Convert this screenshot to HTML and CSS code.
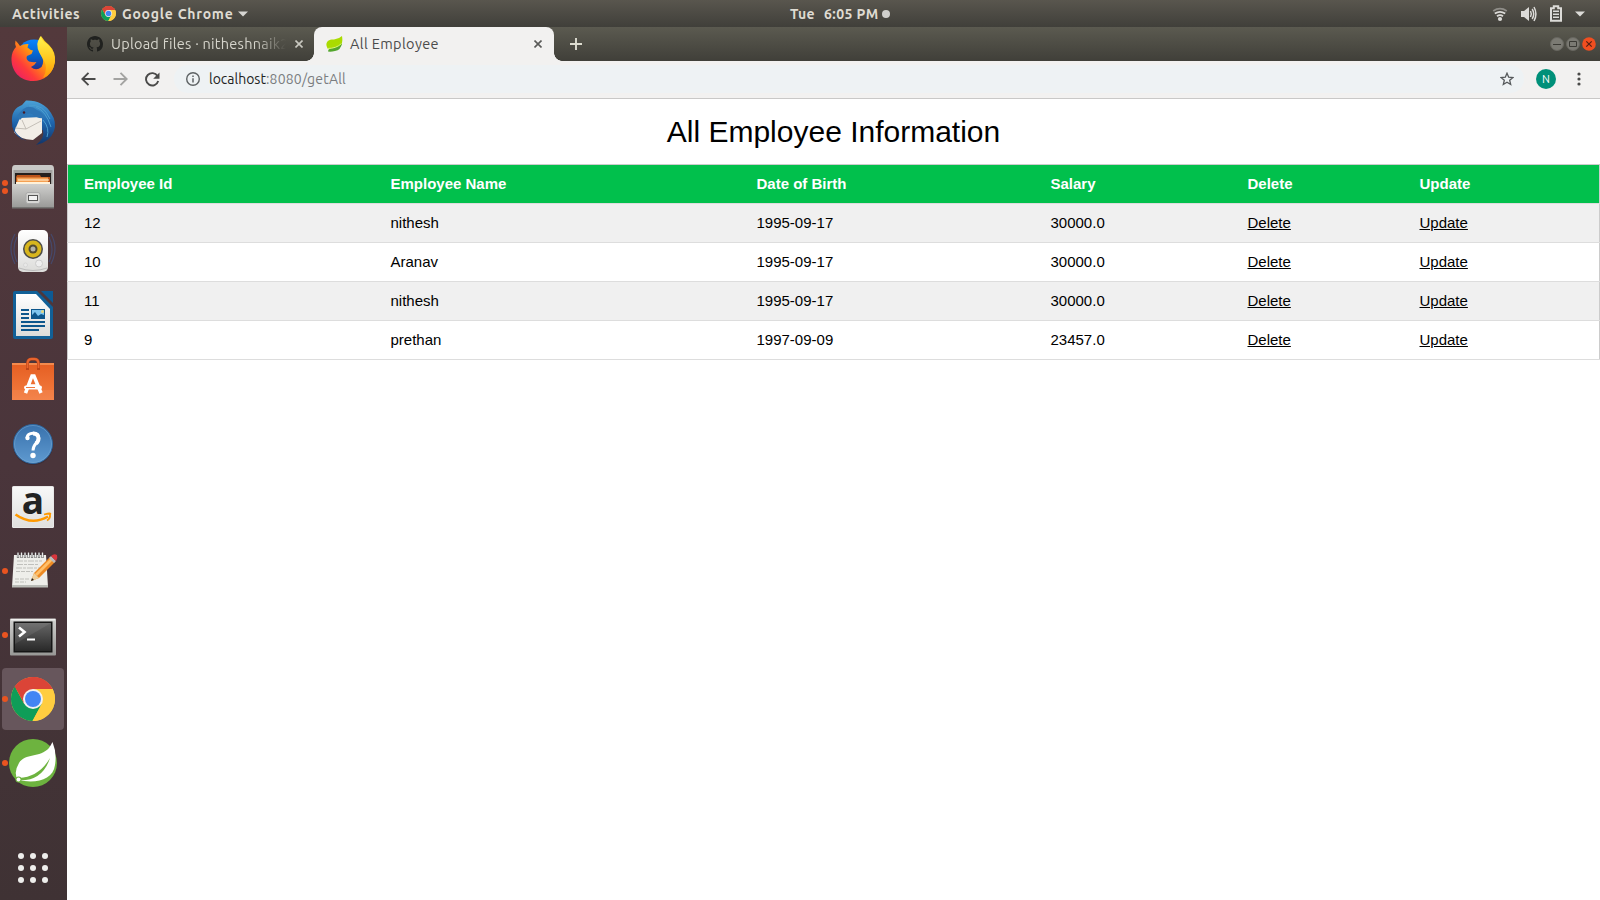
FILE: index.html
```html
<!DOCTYPE html>
<html lang="en">
<head>
<meta charset="utf-8">
<title>All Employee</title>
<link rel="stylesheet" href="styles.css">
</head>
<body>
<svg class="defs" width="0" height="0">
  <defs>
    <linearGradient id="fox" x1="1" y1="0" x2="0" y2="1"><stop offset=".1" stop-color="#ffe226"/><stop offset=".45" stop-color="#ff980e"/><stop offset=".7" stop-color="#ff3b3a"/><stop offset="1" stop-color="#e3127a"/></linearGradient>
    <linearGradient id="foxtail" x1="0" y1="0" x2="0" y2="1"><stop offset="0" stop-color="#fff44f"/><stop offset=".6" stop-color="#ffc31b"/><stop offset="1" stop-color="#ff9508"/></linearGradient>
    <linearGradient id="globe" x1="0" y1="0" x2="0" y2="1"><stop offset="0" stop-color="#0a84ff"/><stop offset=".5" stop-color="#0560c8"/><stop offset="1" stop-color="#331c70"/></linearGradient>
    <linearGradient id="bird" x1="0" y1="0" x2="0" y2="1"><stop offset="0" stop-color="#4ba2d8"/><stop offset=".5" stop-color="#1e65ad"/><stop offset="1" stop-color="#123467"/></linearGradient>
    <linearGradient id="steel" x1="0" y1="0" x2="0" y2="1"><stop offset="0" stop-color="#d0d0ce"/><stop offset="1" stop-color="#989896"/></linearGradient>
    <linearGradient id="paper" x1="0" y1="0" x2="0" y2="1"><stop offset="0" stop-color="#fff"/><stop offset="1" stop-color="#dcdcda"/></linearGradient>
    <linearGradient id="bag" x1="0" y1="0" x2="0" y2="1"><stop offset="0" stop-color="#e55e22"/><stop offset="1" stop-color="#f47d40"/></linearGradient>
    <linearGradient id="help" x1="0" y1="0" x2="0" y2="1"><stop offset="0" stop-color="#3871ac"/><stop offset="1" stop-color="#5f9ad0"/></linearGradient>
    <linearGradient id="screen" x1="0" y1="0" x2="0" y2="1"><stop offset="0" stop-color="#666"/><stop offset="1" stop-color="#292929"/></linearGradient>
    <g id="chrome">
      <circle cx="24" cy="24" r="22" fill="#ffcd40"/>
      <path d="M24 24 4.950 13A22 22 0 0 1 43.050 13.500L43.700 14H24Z" fill="#db4437"/>
      <path d="M4.950 13A22 22 0 0 0 23.500 46L32.700 29 24 24 15.300 29 5.800 11.600Z" fill="#0f9d58"/>
      <path d="M24 14h19.600A22 22 0 0 1 23.500 46L32.700 29Z" fill="#ffcd40"/>
      <path d="M5.800 11.600A22 22 0 0 1 43.600 14H24L15.300 29Z" fill="#db4437"/>
      <circle cx="24" cy="24" r="10" fill="#f1f1f1"/><circle cx="24" cy="24" r="8" fill="#4285f4"/>
    </g>
  </defs>
</svg>
<header class="topbar">
  <div class="top-left">
    <span class="activities">Activities</span>
    <svg class="app-icon" width="15" height="15" viewBox="2 2 44 44"><use href="#chrome"/></svg>
    <span class="app-name">Google Chrome</span>
    <svg class="app-arrow" width="10" height="6"><path d="M0 .5h10L5 5.5z" fill="#d6d5d2"/></svg>
  </div>
  <div class="clock"><span class="day">Tue</span><span class="time">6:05 PM</span><i class="notice"></i></div>
  <div class="tray">
    <svg width="16" height="16" viewBox="0 0 16 16"><g fill="none" stroke="#dcdbd8" stroke-width="1.8"><path d="M1.200 5Q8 .4 14.800 5" stroke="#8f8d88"/><path d="M2.800 7.600Q8 4 13.200 7.600"/><path d="M5 10.300Q8 8 11 10.300"/></g><circle cx="8" cy="13" r="2.1" fill="#dcdbd8"/></svg>
    <svg width="16" height="16" viewBox="0 0 16 16"><path d="M0 5h3l5-4v14l-5-4H0z" fill="#dcdbd8"/><g fill="none" stroke="#dcdbd8" stroke-width="1.5"><path d="M9.500 5q1.600 3 0 6M11.200 3q3 5 0 10"/><path d="M13 1q3.800 7 0 14"/></g></svg>
    <svg width="14" height="17" viewBox="0 0 14 17"><path d="M2 3.200h2.800V1.200h4.400v2H12v12.600H2z" fill="none" stroke="#dcdbd8" stroke-width="2"/><path d="M4 6.200h6M4 9.200h6M4 12.200h6" stroke="#dcdbd8" stroke-width="1.6"/></svg>
    <svg width="10" height="6"><path d="M0 .5h10L5 5.5z" fill="#dcdbd8"/></svg>
  </div>
</header>
<div class="desktop">
  <nav class="dock">
    <div class="tile"><svg viewBox="0 0 67 64">
      <circle cx="34" cy="30" r="17.5" fill="url(#globe)"/>
      <path d="M15.500 13.500Q18 16 20 19Q24 16.500 28.500 17L27.500 20.500Q30 23 33 23.500L31.500 27L27 29Q25.500 32 29 34.500Q33 35.500 36.500 35Q35 38 31 40Q36 44.500 41.500 40Q45 34 41 28Q36 20 41 9Q44 14 49 18Q56 25 55 35C53 47 44 54 33 54C20 54 11 44 11.500 31Q12 24 16 20Q14.500 17 15.500 13.500Z" fill="url(#fox)"/>
      <path d="M40.500 9Q42 14 47 17Q56 25 54.500 36Q53 47 43 51Q49 41 43 32Q35 20 38 14Z" fill="url(#foxtail)"/>
    </svg></div>
    <div class="tile"><svg viewBox="0 0 67 64">
      <path d="M12 31Q11 18 22 14L26 9.500Q43 9 51 22Q57 31 54 40Q50 51 36 54Q45 47 43 39L18 45Q12 39 12 31Z" fill="url(#bird)"/>
      <path d="M14 41 20 27 42 26 42 42 33 49Q19 48 14 41Z" fill="#f2eee7"/><path d="m15 37 11 1 15-8M26 38l-4-9" fill="none" stroke="#b8b2ab" stroke-width=".8"/>
      <path d="M17 25Q27 10 37 19Q43 21 44 27Q37 28 32 23Q27 21 20 29Z" fill="#2d75b5"/>
      <path d="M29 15Q43 12 50 28M36 16Q46 20 51 36M43 29Q50 37 47 46" fill="none" stroke="#4c9fd0" stroke-width="1"/>
      <path d="M12 30Q13 44 27 50Q15 47 12 35Z" fill="#195196"/><circle cx="24" cy="21.500" r="1.200" fill="#471b27"/>
    </svg></div>
    <div class="tile"><i class="run pair"></i><svg viewBox="0 0 67 64">
      <path d="M15 10h36q3 0 3 4v39H12V14q0-4 3-4Z" fill="#c9c9c7"/><path d="M13.500 15h39v14h-39z" fill="#a1a19f"/>
      <path d="M15 18h36v12H15z" fill="#26201e"/><path d="M17 20h23l1 2h9v7H16v-7z" fill="#bc551b"/><path d="M17 22.500h31v6H17z" fill="#f5a052"/><path d="M18 24.500h31v1H18zM16 27h34v2H16z" fill="#fff1d9"/>
      <path d="M12 29h42v24H12z" fill="url(#steel)"/><path d="M12 52h42v1.500H12z" fill="#747472"/>
      <rect x="26" y="37.500" width="14" height="11" rx="2" fill="#d7d7d5" stroke="#aaa"/><rect x="28.500" y="40.500" width="9" height="5" fill="#f2f2f2" stroke="#555"/>
    </svg></div>
    <div class="tile"><svg viewBox="0 0 67 64">
      <g fill="none" stroke="#46496b" stroke-width="1.2"><path d="M15 15q-8 14 0 30M17 18q-6 12 0 25M51 15q8 14 0 30M49 18q6 12 0 25"/></g>
      <rect x="18" y="11" width="30" height="42" rx="5" fill="url(#paper)"/><path d="M19 49q14 5 28 0" fill="none" stroke="#bbb"/>
      <circle cx="33" cy="19" r="0" fill="#bbb"/><circle cx="33" cy="30" r="10" fill="#4b4b48"/><circle cx="33" cy="30" r="8.500" fill="#d7b51d"/><circle cx="33" cy="30" r="4.500" fill="#524a31"/><circle cx="33" cy="30" r="2.500" fill="#b3b2a9"/>
      <circle cx="39" cy="44.500" r="3.500" fill="#eee" stroke="#ccc"/><circle cx="25.500" cy="46" r="2" fill="#e9e9e8" stroke="#ccc" stroke-width=".6"/>
    </svg></div>
    <div class="tile"><svg viewBox="0 0 67 64">
      <path d="M15 8h22l16 16v30q0 2-2 2H15q-2 0-2-2V10q0-2 2-2Z" fill="#116097"/><path d="M41 8h12v12z" fill="#0d5a94"/><path d="M16 11h20l14 15v27H16z" fill="url(#paper)"/>
      <path d="M21 27h8M21 31h8M21 35h8M21 39h24M21 43h24M21 47h18" stroke="#0c568c" stroke-width="2"/>
      <path d="M31 26h14v10H31z" fill="#0c568c"/><path d="M32 27h12v5l-3-1-3 2-3-4-3 3z" fill="#7ec5ef"/><circle cx="42.500" cy="28.500" r="1.500" fill="#e7d67c"/>
    </svg></div>
    <div class="tile"><svg viewBox="0 0 67 64">
      <path d="M12 16h42v37H12z" fill="url(#bag)"/><path d="M12 16h42v2H12z" fill="#f48a4d"/><path d="M12 43h42v10H12z" fill="#fff" opacity=".06"/>
      <path d="M27.500 23v-6q0-5 4-5h3q4 0 4 5v6" fill="none" stroke="#bd4518" stroke-width="3"/><path d="M27.500 21v-4q0-5 4-5h3q4 0 4 5v4" fill="none" stroke="#e9652e" stroke-width="1.8"/>
      <path d="M25.500 46 32 29h2l7 17M29 39h8" fill="none" stroke="#fff" stroke-width="3.5"/><rect x="24" y="38.500" width="18" height="4" rx="2" fill="#fff"/><path d="M26 40.500h9" stroke="#ef7840"/>
    </svg></div>
    <div class="tile"><svg viewBox="0 0 67 64">
      <circle cx="33" cy="34" r="20" fill="#302532" opacity=".5"/><circle cx="33" cy="33" r="19.500" fill="url(#help)" stroke="#2d659d"/><circle cx="33" cy="33" r="18.500" fill="none" stroke="#7aabd4" opacity=".5"/>
      <path d="M27 27C26.500 21 39 20.500 38.800 27C38.600 32 33 32.500 33 39.500" fill="none" stroke="#fff" stroke-width="3"/><path d="M33 22.500q5.500 0 5.500 5 0 3-2.500 5" fill="none" stroke="#fff" stroke-width="4"/><circle cx="27.500" cy="27" r="2.200" fill="#fff"/><circle cx="33" cy="44.500" r="2.700" fill="#fff"/>
    </svg></div>
    <div class="tile"><svg viewBox="0 0 67 64">
      <rect x="12" y="11" width="42" height="42" rx="1.500" fill="#e8e8e8"/><path d="M13 12h40v40H13z" fill="url(#paper)" opacity=".7"/>
      <text class="amazon-a" x="33" y="39" text-anchor="middle">a</text>
      <path d="M15.500 39.500Q32 51 48 41.500" fill="none" stroke="#ff9900" stroke-width="2.6"/><path d="M44 39.500q8-2 6 0 .5 4-3 6" fill="none" stroke="#ff9900" stroke-width="1.8"/>
    </svg></div>
    <div class="tile"><i class="run"></i><svg viewBox="0 0 67 64">
      <path d="M14 16h32l2 32H12z" fill="#eeeeea"/><path d="M12 46h36v2.500H12z" fill="#b9bbb6"/>
      <g fill="none" stroke="#b4b4b0" stroke-width=".8"><path d="M17 22h25M17 25.500h22M16 29h24" stroke-dasharray="6 1 3 1"/><path d="M16 32.500h17M15 40h14M15 43h11" stroke-dasharray="4 1"/></g>
      <path d="M18 14v5M21.500 14v5M25 14v5M28.500 14v5M32 14v5M35.500 14v5M39 14v5M42.500 14v5" stroke="#555" stroke-width="2.2"/><path d="M18 13.500v5M21.500 13.500v5M25 13.500v5M28.500 13.500v5M32 13.500v5M35.500 13.500v5M39 13.500v5M42.500 13.500v5" stroke="#eee" stroke-width="1.2"/>
      <path d="m31 42 3-8 16-16 5 5-16 16z" fill="#ed8a24"/><path d="m35 35 16-16 2 2-16 16z" fill="#ffc06a"/><path d="m31 42 3-8 5 5z" fill="#edcf9c"/><path d="m31 42 1-3 2 2z" fill="#222"/><path d="m49 19 2-2 5 5-2 2z" fill="#bbb"/><path d="m51 17q3-3 6-1 1 3-1 6z" fill="#d8363d"/>
    </svg></div>
    <div class="tile"><i class="run"></i><svg viewBox="0 0 67 64">
      <rect x="10" y="15.500" width="46" height="37" rx="1" fill="url(#steel)"/><path d="M11 16h44v1.500H11z" fill="#f0f0ee"/><path d="M13.500 18.500h39v31h-39z" fill="#151515"/><path d="M15 20h36v28H15z" fill="url(#screen)"/><path d="M15 20h36L15 41z" fill="#fff" opacity=".08"/>
      <path d="m19 24.500 5.500 4.500-5.500 4.500" fill="none" stroke="#fff" stroke-width="2.6"/><path d="M27 36.500h8" stroke="#fff" stroke-width="2"/>
    </svg></div>
    <div class="tile active"><i class="run"></i><svg viewBox="0 0 67 64"><use href="#chrome" x="9" y="8"/></svg></div>
    <div class="tile"><i class="run"></i><svg viewBox="0 0 67 64">
      <circle cx="33" cy="32" r="24" fill="#6db33f"/>
      <path d="M52.500 11Q57 22 55 34C53 49 36 53 18 49Q13 42 19 32C25 22 40 27 49 17Q51 14 52.500 11Z" fill="#fff"/>
      <path d="M19 47Q39 46 50 27Q43 49 21 49.500Z" fill="#6db33f"/><circle cx="18.500" cy="48.500" r="3" fill="#6db33f"/><circle cx="18.500" cy="48.500" r="2" fill="#fff"/>
    </svg></div>
    <div class="apps"><i></i><i></i><i></i><i></i><i></i><i></i><i></i><i></i><i></i></div>
  </nav>
  <main class="browser">
    <div class="tabs">
      <div class="tab idle">
        <svg class="github" width="16" height="16" viewBox="0 0 16 16"><path fill="#20211f" d="M8 0C3.580 0 0 3.580 0 8c0 3.540 2.290 6.530 5.470 7.590.4.070.55-.17.55-.38 0-.19-.01-.82-.01-1.490-2.010.37-2.530-.49-2.690-.94-.09-.23-.48-.94-.82-1.130-.28-.15-.68-.52-.01-.53.63-.01 1.080.58 1.230.82.72 1.210 1.870.87 2.330.66.07-.52.28-.87.51-1.070-1.780-.2-3.640-.89-3.640-3.950 0-.87.31-1.590.82-2.150-.08-.2-.36-1.020.08-2.120 0 0 .67-.21 2.200.82.64-.18 1.320-.27 2-.27s1.360.09 2 .27c1.530-1.040 2.200-.82 2.200-.82.44 1.100.16 1.920.08 2.120.51.56.82 1.270.82 2.150 0 3.070-1.870 3.750-3.650 3.950.29.25.54.73.54 1.480 0 1.070-.01 1.930-.01 2.200 0 .21.15.46.55.38A8.010 8.010 0 0 0 16 8c0-4.420-3.580-8-8-8z"/></svg>
        <span class="tab-title upload">Upload files · nitheshnaik2</span>
        <svg class="close" width="8" height="8"><path d="m.5.5 7 7m0-7-7 7" stroke="#c9c8c0" stroke-width="1.6"/></svg>
      </div>
      <div class="tab current">
        <svg class="leaf" width="17" height="16" viewBox="0 0 17 16"><path d="M16 0Q18 12 9 13.500Q4 15 2 13C-2 7 2 3 8 3.500Q13 3 16 0Z" fill="#aadb00"/><path d="M2 15.500q0-3 5-3.500 6-1 9-5-1 7-7 8-4 1-7 .5Z" fill="#53a62d"/><path d="M1.500 12.500q9 0 14-5" fill="none" stroke="#d9f27a"/></svg>
        <span class="tab-title">All Employee</span>
        <svg class="close" width="8" height="8"><path d="m.5.5 7 7m0-7-7 7" stroke="#5a5a58" stroke-width="1.6"/></svg>
      </div>
      <svg class="plus" width="12" height="12"><path d="M6 0v12M0 6h12" stroke="#dddcd0" stroke-width="1.9"/></svg>
      <div class="controls">
        <svg width="14" height="14"><circle cx="7" cy="7" r="6.500" fill="#7b7a73" stroke="#67665f"/><path d="M3 7.500h8" stroke="#3b3a35"/></svg>
        <svg width="14" height="14"><circle cx="7" cy="7" r="6.500" fill="#7b7a73" stroke="#67665f"/><path d="M3.500 4.500h7v5h-7z" fill="none" stroke="#3b3a35"/></svg>
        <svg width="14" height="14"><circle cx="7" cy="7" r="6.800" fill="#f04e20"/><path d="m4.300 4.300 5.400 5.400m0-5.400-5.400 5.400" stroke="#542013" stroke-width="1.2"/></svg>
      </div>
    </div>
    <div class="toolbar">
      <svg width="15" height="14" viewBox="0 0 15 14"><path d="M14.500 7H1.500M7.500.8 1.300 7l6.200 6.200" fill="none" stroke="#4a4a49" stroke-width="1.9"/></svg>
      <svg class="forward" width="15" height="14" viewBox="0 0 15 14"><path d="M.5 7h13M7.500.8 13.700 7l-6.200 6.200" fill="none" stroke="#a3a3a1" stroke-width="1.9"/></svg>
      <svg class="reload" width="15" height="15" viewBox="0 0 15 15"><path d="M12.500 4A6.200 6.200 0 1 0 13.200 9" fill="none" stroke="#4a4a49" stroke-width="1.9"/><path d="M14.500.5v6.300H8.200z" fill="#4a4a49"/></svg>
      <div class="omnibox">
        <svg width="14" height="14"><circle cx="7" cy="7" r="6.300" fill="none" stroke="#5d6264" stroke-width="1.4"/><path d="M7 6.300v4.200M7 3.400v1.700" stroke="#5d6264" stroke-width="1.5"/></svg>
        <span class="host">localhost</span><span class="path">:8080/getAll</span>
        <svg class="star" width="14" height="14" viewBox="0 0 14 14"><path d="m7 1.200 1.700 4 4.300.3-3.300 2.800 1 4.200L7 10.300l-3.700 2.200 1-4.200L1 5.500l4.300-.3z" fill="none" stroke="#55595b" stroke-width="1.3"/></svg>
      </div>
      <span class="avatar">N</span>
      <svg class="menu" width="4" height="14"><g fill="#4a4a49"><circle cx="2" cy="2" r="1.600"/><circle cx="2" cy="7" r="1.600"/><circle cx="2" cy="12" r="1.600"/></g></svg>
    </div>
    <section class="page">
      <h2>All Employee Information</h2>
      <table>
        <colgroup><col class="c-id"><col class="c-name"><col class="c-dob"><col class="c-salary"><col class="c-delete"><col></colgroup>
        <thead><tr><th>Employee Id</th><th>Employee Name</th><th>Date of Birth</th><th>Salary</th><th>Delete</th><th>Update</th></tr></thead>
        <tbody>
          <tr><td>12</td><td>nithesh</td><td>1995-09-17</td><td>30000.0</td><td><a href="#">Delete</a></td><td><a href="#">Update</a></td></tr>
          <tr><td>10</td><td>Aranav</td><td>1995-09-17</td><td>30000.0</td><td><a href="#">Delete</a></td><td><a href="#">Update</a></td></tr>
          <tr><td>11</td><td>nithesh</td><td>1995-09-17</td><td>30000.0</td><td><a href="#">Delete</a></td><td><a href="#">Update</a></td></tr>
          <tr><td>9</td><td>prethan</td><td>1997-09-09</td><td>23457.0</td><td><a href="#">Delete</a></td><td><a href="#">Update</a></td></tr>
        </tbody>
      </table>
    </section>
  </main>
</div>
</body>
</html>
```
FILE: styles.css
```css
* { box-sizing: border-box; }
body { margin: 0; width: 1600px; height: 900px; overflow: hidden; display: flex; flex-direction: column; font-family: Ubuntu, "Noto Sans", sans-serif; background: #fff; }
svg { display: block; flex: none; }
.defs { position: absolute; }

.topbar { height: 27px; flex: none; display: grid; grid-template-columns: 790px 100px 1fr; align-items: center; background: linear-gradient(#59564e, #403f3a); color: #dfdbd2; font-size: 14px; font-weight: 600; letter-spacing: .6px; line-height: 26px; white-space: nowrap; }
.top-left { display: flex; align-items: center; padding-left: 12px; }
.activities { width: 89px; }
.app-name { margin-left: 6px; width: 116px; letter-spacing: .75px; }
.clock { display: flex; align-items: center; width: 100px; letter-spacing: .4px; }
.day { width: 34px; }
.time { width: 54px; }
.notice { width: 8px; height: 8px; border-radius: 50%; background: #d0cfcc; margin-left: 4px; flex: none; }
.day, .time { flex: none; }
.clock .notice { margin-left: 4px; margin-right: 0; }
.clock .day { width: 34px; }
.tray { display: flex; align-items: center; justify-content: flex-end; gap: 12px; padding-right: 15px; }
.tray svg:first-child { margin-right: 1px; }

.desktop { flex: 1; display: flex; min-height: 0; }
.dock { width: 67px; flex: none; display: flex; flex-direction: column; background: linear-gradient(#53393c, #4a353b 50%, #3f3234); }
.tile { position: relative; height: 64px; flex: none; }
.tile svg { width: 67px; height: 64px; position: relative; }
.tile.active::before { content: ""; position: absolute; left: 2px; top: 1px; width: 62px; height: 62px; border-radius: 4px; background: #67565c; }
.run { position: absolute; z-index: 1; left: 2px; top: 29px; width: 6px; height: 6px; border-radius: 50%; background: #e95420; }
.run.pair { top: 25px; box-shadow: 0 8px #e95420; }
.amazon-a { font: bold 37px "Open Sans", sans-serif; fill: #222; }
.apps { margin: auto 0 17px 18px; display: grid; grid-template-columns: repeat(3, 6px); gap: 6px; }
.apps i { width: 6px; height: 6px; border-radius: 50%; background: #eeeeec; }

.browser { flex: 1; display: flex; flex-direction: column; min-width: 0; }
.tabs { height: 34px; flex: none; display: flex; align-items: center; background: linear-gradient(#5b5a50, #403f39); font-size: 14.5px; }
.tab { display: flex; align-items: center; height: 34px; white-space: nowrap; }
.idle { width: 247px; padding: 0 11px 0 20px; color: #d5d4cb; }
.current { width: 240px; padding: 0 12px; border-radius: 8px 8px 0 0; background: #f2f1f0; color: #4b4b4b; position: relative; }
.current::before, .current::after { content: ""; position: absolute; bottom: 0; width: 8px; height: 8px; }
.current::before { left: -8px; background: radial-gradient(circle at 0 0, transparent 7.5px, #f2f1f0 8px); }
.current::after { right: -8px; background: radial-gradient(circle at 100% 0, transparent 7.5px, #f2f1f0 8px); }
.tab-title { margin-left: 7px; line-height: 34px; height: 34px; letter-spacing: .35px; }
.upload { width: 175px; margin-left: 8px; letter-spacing: .25px; overflow: hidden; -webkit-mask-image: linear-gradient(90deg, #000 82%, transparent); mask-image: linear-gradient(90deg, #000 82%, transparent); }
.close { margin-left: auto; }
.plus { margin-left: 16px; }
.controls { display: flex; gap: 2px; margin-left: auto; margin-right: 4px; }

.toolbar { height: 38px; flex: none; display: flex; align-items: center; background: #f2f1f0; border-bottom: 1px solid #c9c8c7; padding: 0 19px 1px 14px; font-size: 14px; }
.forward { margin-left: 17px; }
.reload { margin-left: 17px; }
.omnibox { display: flex; align-items: center; width: 1351px; height: 28px; margin-left: 14px; padding: 0 10px 0 12px; border-radius: 14px; background: #eef2f4; line-height: 26px; }
.host { margin-left: 9px; color: #222; }
.path { color: #7a7d80; letter-spacing: .18px; }
.star { margin-left: auto; }
.avatar { width: 20px; height: 20px; margin-left: 12px; border-radius: 50%; background: #009079; color: #fff; font-size: 11px; line-height: 20px; text-align: center; }
.menu { margin-left: 21px; }

.page { flex: 1; background: #fff; font: 15px/1.5 "Liberation Sans", Arial, sans-serif; color: #000; }
h2 { margin: 10px 0; font-size: 30px; font-weight: 400; line-height: 45px; text-align: center; }
table { width: 1533px; border-collapse: collapse; table-layout: fixed; border: 1px solid #ccc; line-height: 22px; }
.c-id { width: 315px; }
.c-name { width: 366px; }
.c-dob { width: 294px; }
.c-salary { width: 197px; }
.c-delete { width: 172px; }
tr { border-bottom: 1px solid #ddd; }
th, td { padding: 8px; text-align: left; vertical-align: top; }
th:first-child, td:first-child { padding-left: 16px; }
thead tr { background: #01c04c; color: #fff; }
tbody tr:nth-child(odd) { background: #f0f0f0; }
a { color: inherit; }
```
